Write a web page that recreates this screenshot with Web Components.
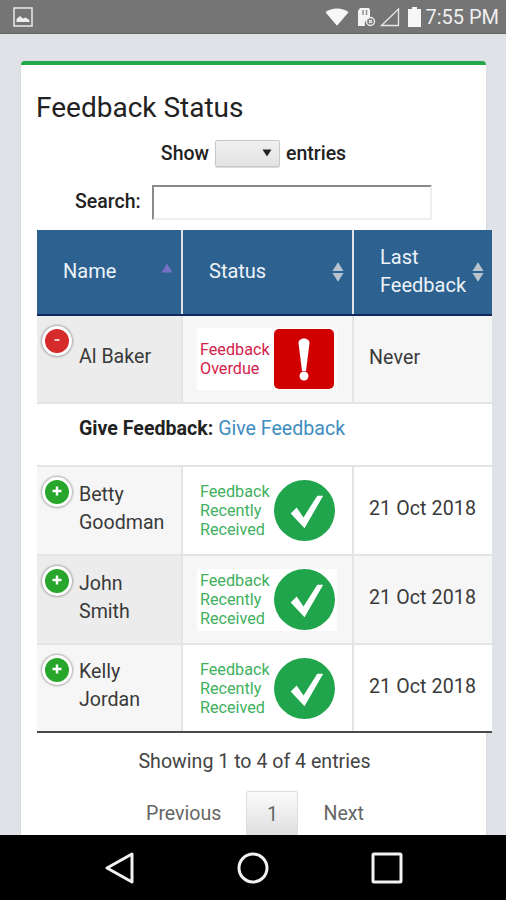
<!DOCTYPE html>
<html>
<head>
<meta charset="utf-8">
<title>Feedback Status</title>
<style>
    html, body { margin: 0; padding: 0; height: 100%; overflow: hidden; }
    body { font-family: Roboto, "Liberation Sans", sans-serif; color: #333; background: #dfe3e8; }
    feedback-app { height: 900px; }
</style>
</head>
<body>
<feedback-app>
    <status-bar slot="top" time="7:55 PM"></status-bar>
    <feedback-card title="Feedback Status">
        <table-filters slot="filters"></table-filters>
        <feedback-table slot="table">
            <sort-header slot="head" label="Name" sort="asc"></sort-header>
            <sort-header slot="head" label="Status" sort="both"></sort-header>
            <sort-header slot="head" label="Last Feedback" sort="both"></sort-header>

            <feedback-row name="Al Baker" state="overdue" last="Never" open tone="grey"></feedback-row>
            <give-row></give-row>
            <feedback-row name="Betty Goodman" state="ok" last="21 Oct 2018"></feedback-row>
            <feedback-row name="John Smith" state="ok" last="21 Oct 2018" tone="grey"></feedback-row>
            <feedback-row name="Kelly Jordan" state="ok" last="21 Oct 2018"></feedback-row>
        </feedback-table>
        <table-pager slot="pager"></table-pager>
    </feedback-card>
    <nav-bar slot="bottom"></nav-bar>
</feedback-app>

<script>
class FeedbackApp extends HTMLElement {
    connectedCallback() {
        this.attachShadow({ mode: 'open' });
        this.shadowRoot.innerHTML = `
            <style>
                :host { display: flex; flex-direction: column; overflow: hidden; }
                .content { flex: 1; min-height: 0; overflow: hidden; }
            </style>
            <slot name="top"></slot>
            <div class="content"><slot></slot></div>
            <slot name="bottom"></slot>
        `;
    }
}

class StatusBar extends HTMLElement {
    connectedCallback() {
        this.attachShadow({ mode: 'open' });
        const time = this.getAttribute('time') || '';
        this.shadowRoot.innerHTML = `
            <style>
                :host {
                    display: flex;
                    align-items: center;
                    height: 33px;
                    background: #757575;
                    border-bottom: 1px solid #666;
                    padding: 0 7px 0 13px;
                    color: #f0f0f0;
                }
                svg { display: block; flex: none; }
                .icons { margin-left: auto; display: flex; align-items: center; }
                .time { font: 400 20px Roboto, sans-serif; margin-left: 4px; }
            </style>
            <svg width="20" height="20" viewBox="0 0 20 20">
                <rect x="1" y="1" width="18" height="18" fill="none" stroke="#e4e4e4" stroke-width="1.6"/>
                <path d="M3.500 15 L3.500 12 L7 9 L10 11.500 L12.500 10.500 L16.500 13 L16.500 15 Z" fill="#eee"/>
            </svg>
            <div class="icons">
                <svg width="24" height="18" viewBox="0 0 25 18"><path d="M0.500 4 C7 -1 18 -1 24.500 4 L12.500 18 Z" fill="#f7f7f7"/></svg>
                <svg width="20" height="20" viewBox="0 0 20 20" style="margin-left:7px">
                    <path d="M4 1 H13 L14 3 V11 A6 6 0 0 0 9 19 H2 V4 Z" fill="#f4f4f4"/>
                    <path d="M7 3 V8 M10.500 3 V8" stroke="#888" stroke-width="1.400"/>
                    <circle cx="14.500" cy="14.500" r="4" fill="none" stroke="#eee" stroke-width="1.400"/>
                    <path d="M13 13 L16 16 M16 13 L13 16" stroke="#eee" stroke-width="1.200"/>
                </svg>
                <svg width="20" height="20" viewBox="0 0 20 20" style="margin-left:4px"><path d="M1.500 18.500 L18.500 2 V18.500 Z" fill="none" stroke="#e8e8e8" stroke-width="1.300"/></svg>
                <svg width="13" height="20" viewBox="0 0 13 20" style="margin-left:8px"><path d="M4 0 H9 V2 H13 V20 H0 V2 H4 Z" fill="#f7f7f7"/></svg>
                <span class="time">${time}</span>
            </div>
        `;
    }
}

class FeedbackCard extends HTMLElement {
    connectedCallback() {
        this.attachShadow({ mode: 'open' });
        const title = this.getAttribute('title') || '';
        this.shadowRoot.innerHTML = `
            <style>
                :host {
                    display: block;
                    box-sizing: border-box;
                    width: 465px;
                    height: 900px;
                    margin: 27px 0 0 21px;
                    padding: 0 16px;
                    background: #fff;
                    border-top: 4px solid #23a849;
                    border-radius: 4px 4px 0 0;
                    box-shadow: 0 0 2px rgba(0, 0, 0, .12);
                }
                h2 {
                    margin: 0 0 0 -1px;
                    padding-top: 26px;
                    height: 43px;
                    font: 400 28px/34px Roboto, sans-serif;
                    color: #222;
                }
            </style>
            <h2>${title}</h2>
            <slot name="filters"></slot>
            <slot name="table"></slot>
            <slot name="pager"></slot>
        `;
    }
}

class TableFilters extends HTMLElement {
    connectedCallback() {
        this.attachShadow({ mode: 'open' });
        this.shadowRoot.innerHTML = `
            <style>
                :host { display: block; font: 500 19.5px Roboto, sans-serif; color: #222; }
                .show {
                    display: flex;
                    justify-content: center;
                    align-items: center;
                    gap: 6px;
                    height: 28px;
                    padding-top: 2px;
                    margin-top: 3px;
                }
                .select {
                    box-sizing: border-box;
                    width: 65px;
                    height: 27px;
                    display: flex;
                    align-items: center;
                    justify-content: flex-end;
                    padding-right: 7px;
                    border: 1px solid #c8c8c8;
                    border-radius: 2px;
                    background: linear-gradient(#f1f1f1, #e2e2e2);
                    box-shadow: 0 1px 1px rgba(0, 0, 0, .15);
                }
                .select svg { display: block; }
                .search {
                    display: flex;
                    align-items: center;
                    gap: 11px;
                    margin-top: 18px;
                    padding-left: 38px;
                }
                .search span { margin-bottom: 2px; }
                .input {
                    box-sizing: border-box;
                    width: 280px;
                    height: 35px;
                    border: 2px solid;
                    border-color: #8a8a8a #eee #eee #8a8a8a;
                    background: #fff;
                }
            </style>
            <div class="show">
                <span>Show</span>
                <div class="select"><svg width="10" height="8" viewBox="0 0 10 8"><path d="M0.500 0.500 H9.500 L5 7.500 Z" fill="#222"/></svg></div>
                <span>entries</span>
            </div>
            <div class="search">
                <span>Search:</span>
                <div class="input"></div>
            </div>
        `;
    }
}

// column widths are shared by header and rows
const COLUMNS = '144px 169px 138px';

class FeedbackTable extends HTMLElement {
    connectedCallback() {
        this.attachShadow({ mode: 'open' });
        this.shadowRoot.innerHTML = `
            <style>
                :host {
                    display: block;
                    width: 455px;
                    margin-top: 10px;
                    border-bottom: 2px solid #4a4a4a;
                    background: #e4e4e4;
                }
                .head {
                    display: grid;
                    grid-template-columns: ${COLUMNS};
                    column-gap: 2px;
                    background: #dfe3e8;
                    border-bottom: 2px solid #12295f;
                }
            </style>
            <div class="head"><slot name="head"></slot></div>
            <slot></slot>
        `;
    }
}

class SortHeader extends HTMLElement {
    connectedCallback() {
        this.attachShadow({ mode: 'open' });
        const label = this.getAttribute('label') || '';
        const sort = this.getAttribute('sort');
        const arrows = sort === 'asc'
            ? `<svg width="12" height="10" viewBox="0 0 13 11" style="top:33px"><path d="M6.500 0.500 L12.500 10.500 H0.500 Z" fill="#7670c4"/></svg>`
            : `<svg width="12" height="22" viewBox="0 0 13 22" style="top:31px"><path d="M6.500 0.500 L12.500 10 H0.500 Z" fill="#b8c4d0"/><path d="M6.500 21.500 L12.500 12 H0.500 Z" fill="#b8c4d0"/></svg>`;
        this.shadowRoot.innerHTML = `
            <style>
                :host {
                    display: flex;
                    align-items: center;
                    box-sizing: border-box;
                    position: relative;
                    height: 84px;
                    padding: 0 24px 2px 26px;
                    background: #2d6190;
                    color: #eef3f8;
                    font: 400 20px/28px Roboto, sans-serif;
                }
                svg { position: absolute; right: 8px; display: block; }
            </style>
            <span>${label}</span>
            ${arrows}
        `;
    }
}

class ExpandToggle extends HTMLElement {
    connectedCallback() {
        this.attachShadow({ mode: 'open' });
        const open = this.hasAttribute('open');
        this.shadowRoot.innerHTML = `
            <style>
                :host {
                    position: absolute;
                    left: 5px;
                    top: 10px;
                    box-sizing: border-box;
                    width: 30px;
                    height: 30px;
                    border-radius: 50%;
                    background: ${open ? '#d62b2b' : '#27a62b'};
                    border: 3px solid #fff;
                    box-shadow: 0 0 2px 1px rgba(0, 0, 0, .3);
                    display: flex;
                    align-items: center;
                    justify-content: center;
                }
                svg { display: block; }
            </style>
            <svg width="12" height="12" viewBox="0 0 12 12">
                ${open
                    ? '<path d="M3.500 5 H8.500" stroke="#f4c8c8" stroke-width="2"/>'
                    : '<path d="M1.500 5 H10.500 M6 0.500 V9.500" stroke="#fff" stroke-width="2.400"/>'}
            </svg>
        `;
    }
}

class StatusBadge extends HTMLElement {
    connectedCallback() {
        this.attachShadow({ mode: 'open' });
        const overdue = this.getAttribute('state') === 'overdue';
        const lines = overdue ? ['Feedback', 'Overdue'] : ['Feedback', 'Recently', 'Received'];
        const icon = overdue
            ? `<svg width="60" height="60" viewBox="0 0 60 60">
                   <rect width="60" height="60" rx="5" fill="#d10000"/>
                   <path d="M24.500 14 C24.500 8 35.500 8 35.500 14 L32 42 H28 Z" fill="#fff"/>
                   <circle cx="30" cy="47" r="4.500" fill="#fff"/>
               </svg>`
            : `<svg width="61" height="61" viewBox="0 0 62 62">
                   <circle cx="31" cy="31" r="31" fill="#20a54c"/>
                   <path d="M17 34 L23 28 L30 38 L44 16 L50 16 L31 49 Z" fill="#fff"/>
               </svg>`;
        this.shadowRoot.innerHTML = `
            <style>
                :host {
                    display: flex;
                    align-items: center;
                    justify-content: space-between;
                    box-sizing: border-box;
                    width: 140px;
                    height: 62px;
                    padding: 0 ${overdue ? 3 : 2}px 0 3px;
                    background: #fff;
                    font: 400 16.2px/19px Roboto, sans-serif;
                    color: ${overdue ? '#d2234a' : '#3fb060'};
                }
                svg { display: block; flex: none; }
            </style>
            <div>${lines.join('<br>')}</div>
            ${icon}
        `;
    }
}

class FeedbackRow extends HTMLElement {
    connectedCallback() {
        this.attachShadow({ mode: 'open' });
        const grey = this.getAttribute('tone') === 'grey';
        const open = this.hasAttribute('open');
        const last = this.matches(':last-child');
        this.shadowRoot.innerHTML = `
            <style>
                :host {
                    display: grid;
                    grid-template-columns: ${COLUMNS};
                    column-gap: 2px;
                    height: ${open || last ? 86 : 87}px;
                    margin-bottom: ${last ? 0 : 2}px;
                    font: 400 19.6px/28px Roboto, sans-serif;
                    color: #3a3a3a;
                }
                .cell { display: flex; align-items: center; box-sizing: border-box; }
                .name { position: relative; padding: 0 0 4px 42px; background: ${grey ? '#ececec' : '#f6f6f6'}; }
                .name span { max-width: 92px; }
                .status { padding-left: 14px; background: ${grey ? '#f6f6f6' : '#fff'}; }
                .last { padding: 0 0 3px 15px; background: ${grey ? '#f6f6f6' : '#fff'}; letter-spacing: .1px; }
            </style>
            <div class="cell name">
                <expand-toggle ${open ? 'open' : ''}></expand-toggle>
                <span>${this.getAttribute('name') || ''}</span>
            </div>
            <div class="cell status"><status-badge state="${this.getAttribute('state')}"></status-badge></div>
            <div class="cell last">${this.getAttribute('last') || ''}</div>
        `;
    }
}

class GiveRow extends HTMLElement {
    connectedCallback() {
        this.attachShadow({ mode: 'open' });
        this.shadowRoot.innerHTML = `
            <style>
                :host {
                    display: block;
                    box-sizing: border-box;
                    height: 61px;
                    margin-bottom: 2px;
                    padding: 12px 0 0 42px;
                    background: #fff;
                    font: 400 19.6px/26px Roboto, sans-serif;
                }
                b { font-weight: 700; color: #222; }
                a { color: #3f8dc0; text-decoration: none; }
            </style>
            <b>Give Feedback:</b> <a href="#">Give Feedback</a>
        `;
    }
}

class TablePager extends HTMLElement {
    connectedCallback() {
        this.attachShadow({ mode: 'open' });
        this.shadowRoot.innerHTML = `
            <style>
                :host { display: block; width: 435px; color: #444; font: 400 19.6px/26px Roboto, sans-serif; }
                .info { text-align: center; margin-top: 16px; }
                .pages {
                    display: flex;
                    justify-content: center;
                    align-items: center;
                    margin-top: 16px;
                    padding-left: 1px;
                    color: #666;
                }
                .pages span { padding: 0 25px 0; }
                .pages .current {
                    box-sizing: border-box;
                    width: 52px;
                    height: 46px;
                    padding: 2px 0 0;
                    margin: 0;
                    display: flex;
                    align-items: center;
                    justify-content: center;
                    border: 1px solid #ddd;
                    border-radius: 2px;
                    background: linear-gradient(#fbfbfb, #dedede);
                }
            </style>
            <div class="info">Showing 1 to 4 of 4 entries</div>
            <div class="pages">
                <span>Previous</span>
                <span class="current">1</span>
                <span>Next</span>
            </div>
        `;
    }
}

class NavBar extends HTMLElement {
    connectedCallback() {
        this.attachShadow({ mode: 'open' });
        this.shadowRoot.innerHTML = `
            <style>
                :host {
                    display: flex;
                    justify-content: center;
                    align-items: center;
                    gap: 102px;
                    height: 65px;
                    padding-left: 2px;
                    background: #000;
                }
                svg { display: block; }
                path, circle, rect { fill: none; stroke: #f2f2f2; stroke-width: 3; }
            </style>
            <svg width="30" height="32" viewBox="0 0 30 32"><path d="M27 2 V30 L2 16 Z" stroke-linejoin="round"/></svg>
            <svg width="32" height="32" viewBox="0 0 32 32"><circle cx="16" cy="16" r="14"/></svg>
            <svg width="32" height="32" viewBox="0 0 32 32"><rect x="2" y="2" width="28" height="28" rx="1"/></svg>
        `;
    }
}

customElements.define('feedback-app', FeedbackApp);
customElements.define('status-bar', StatusBar);
customElements.define('feedback-card', FeedbackCard);
customElements.define('table-filters', TableFilters);
customElements.define('feedback-table', FeedbackTable);
customElements.define('sort-header', SortHeader);
customElements.define('expand-toggle', ExpandToggle);
customElements.define('status-badge', StatusBadge);
customElements.define('feedback-row', FeedbackRow);
customElements.define('give-row', GiveRow);
customElements.define('table-pager', TablePager);
customElements.define('nav-bar', NavBar);
</script>
</body>
</html>
